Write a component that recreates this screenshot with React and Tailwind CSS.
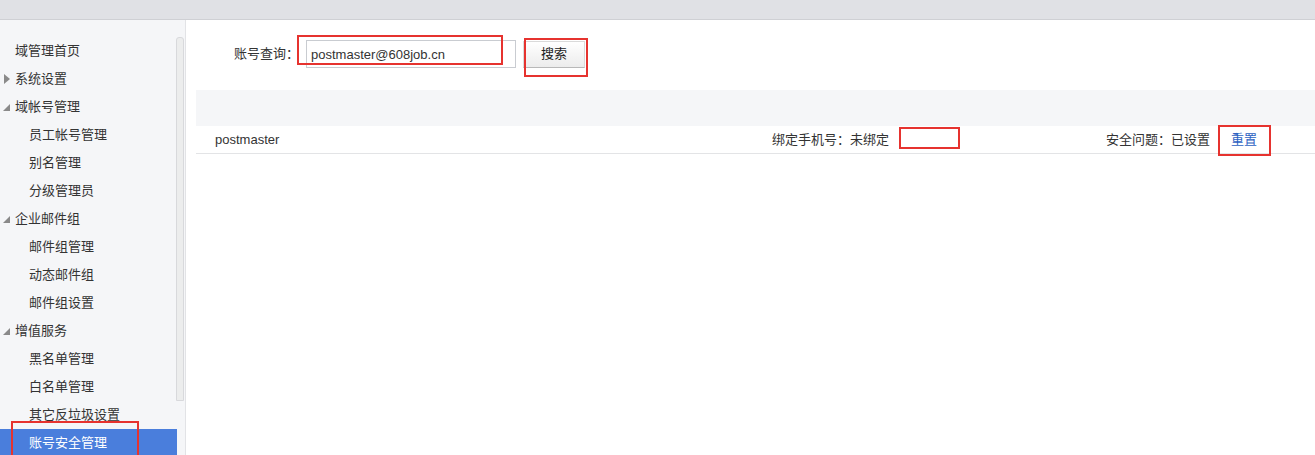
const menu = [
  { label: '域管理首页', level: 1 },
  { label: '系统设置', level: 1, arrow: 'closed' },
  { label: '域帐号管理', level: 1, arrow: 'open' },
  { label: '员工帐号管理', level: 2 },
  { label: '别名管理', level: 2 },
  { label: '分级管理员', level: 2 },
  { label: '企业邮件组', level: 1, arrow: 'open' },
  { label: '邮件组管理', level: 2 },
  { label: '动态邮件组', level: 2 },
  { label: '邮件组设置', level: 2 },
  { label: '增值服务', level: 1, arrow: 'open' },
  { label: '黑名单管理', level: 2 },
  { label: '白名单管理', level: 2 },
  { label: '其它反垃圾设置', level: 2 },
  { label: '账号安全管理', level: 2, active: true },
];

function Arrow({ type }) {
  if (type === 'closed') {
    return (
      <svg width="6" height="10" viewBox="0 0 6 10" className="absolute left-[4px] top-[9px]">
        <path d="M0 0 L6 5 L0 10 Z" fill="#8a8a8a" />
      </svg>
    );
  }
  return (
    <svg width="7" height="7" viewBox="0 0 7 7" className="absolute left-[3px] top-[11px]">
      <path d="M7 0 L7 7 L0 7 Z" fill="#8a8a8a" />
    </svg>
  );
}

function Sidebar() {
  return (
    <aside className="relative w-[186px] shrink-0 bg-[#f5f6f8] border-r border-[#e2e3e6] pt-[17px]">
      <div className="absolute right-[1px] top-[17px] h-[364px] w-[8px] rounded-t-[3px] border border-[#d8d9dc] bg-[#eceded]" />
      <ul className="w-[177px]">
        {menu.map((m) => (
          <li
            key={m.label}
            className={
              'relative h-[28px] leading-[28px] text-[13px] ' +
              (m.active ? 'bg-[#4a7edc] text-white' : 'text-[#333]') +
              (m.level === 1 ? ' pl-[15px]' : ' pl-[29px]')
            }
          >
            {m.arrow && <Arrow type={m.arrow} />}
            {m.label}
          </li>
        ))}
      </ul>
      <div className="pointer-events-none absolute left-[11px] top-[401px] h-[40px] w-[128px] border-2 border-[#e6332f]" />
    </aside>
  );
}

function RedBox({ className }) {
  return <div className={'pointer-events-none absolute border-2 border-[#e6332f] ' + className} />;
}

export default function App() {
  return (
    <div
      className="h-[455px] w-[1315px] overflow-hidden bg-white"
      style={{ fontFamily: '"Liberation Sans", "Noto Sans CJK SC", sans-serif' }}
    >
      <div className="h-[20px] bg-[#e0e1e5] border-b border-[#cfd0d4]" />
      <div className="flex h-[435px]">
        <Sidebar />
        <main className="relative flex-1 pl-[10px]">
          <div className="flex items-center h-[28px] mt-[20px] pl-[38px] text-[13px] text-[#333]">
            <span className="w-[72px]">账号查询：</span>
            <input
              readOnly
              value="postmaster@608job.cn"
              className="h-[28px] w-[210px] border border-[#c9ccd1] px-[4px] text-[13px] text-[#333] outline-none"
            />
            <button className="ml-[7px] h-[27px] w-[62px] border border-[#dadada] border-b-[#b8b8b8] bg-gradient-to-b from-white to-[#ececec] text-[13px] text-[#222]">
              搜索
            </button>
          </div>
          <div className="mt-[22px] h-[36px] bg-[#f5f6f8]" />
          <div className="flex h-[28px] items-center border-b border-[#e3e4e6] text-[13px] text-[#333]">
            <span className="w-[576px] pl-[19px]">postmaster</span>
            <span className="w-[334px]">绑定手机号：未绑定</span>
            <span className="w-[125px]">安全问题：已设置</span>
            <a className="text-[#2d62c2]">重置</a>
          </div>

          <RedBox className="left-[111px] top-[15px] h-[30px] w-[206px]" />
          <RedBox className="left-[338px] top-[18px] h-[39px] w-[64px]" />
          <RedBox className="left-[713px] top-[107px] h-[22px] w-[61px]" />
          <RedBox className="left-[1032px] top-[105px] h-[31px] w-[53px]" />
        </main>
      </div>
    </div>
  );
}
